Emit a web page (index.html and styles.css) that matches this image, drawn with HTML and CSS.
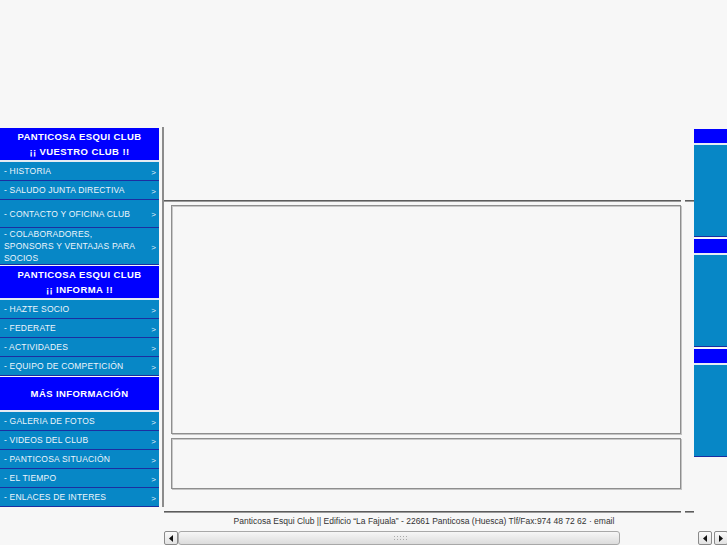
FILE: index.html
```html
<!DOCTYPE html>
<html lang="es">
<head>
<meta charset="utf-8">
<title>Panticosa Esqui Club</title>
<link rel="stylesheet" href="styles.css">
</head>
<body>
<div class="page">
  <div class="left">
    <nav class="menu">
      <div class="head head-first">PANTICOSA ESQUI CLUB<br>¡¡ VUESTRO CLUB !!</div>
      <a class="item">- HISTORIA<span class="arr">&gt;</span></a>
      <a class="item">- SALUDO JUNTA DIRECTIVA<span class="arr">&gt;</span></a>
      <a class="item item-mid">- CONTACTO Y OFICINA CLUB<span class="arr">&gt;</span></a>
      <a class="item item-tall"><span class="multi">- COLABORADORES,<br>SPONSORS Y VENTAJAS PARA<br>SOCIOS</span><span class="arr">&gt;</span></a>
      <div class="head">PANTICOSA ESQUI CLUB<br>¡¡ INFORMA !!</div>
      <a class="item">- HAZTE SOCIO<span class="arr">&gt;</span></a>
      <a class="item">- FEDERATE<span class="arr">&gt;</span></a>
      <a class="item">- ACTIVIDADES<span class="arr">&gt;</span></a>
      <a class="item">- EQUIPO DE COMPETICIÓN<span class="arr">&gt;</span></a>
      <div class="head head-single">MÁS INFORMACIÓN</div>
      <a class="item">- GALERIA DE FOTOS<span class="arr">&gt;</span></a>
      <a class="item">- VIDEOS DEL CLUB<span class="arr">&gt;</span></a>
      <a class="item">- PANTICOSA SITUACIÓN<span class="arr">&gt;</span></a>
      <a class="item">- EL TIEMPO<span class="arr">&gt;</span></a>
      <a class="item">- ENLACES DE INTERES<span class="arr">&gt;</span></a>
    </nav>
  </div>
  <div class="frame">
    <div class="content">
      <main class="main">
        <div class="top-space"></div>
        <div class="rule"><span class="rule-long"></span><span class="rule-short"></span></div>
        <div class="box box-big"></div>
        <div class="box box-small"></div>
        <div class="rule rule-bottom"><span class="rule-long"></span><span class="rule-short"></span></div>
        <p class="footer">Panticosa Esqui Club || Edificio “La Fajuala” - 22661 Panticosa (Huesca) Tlf/Fax:974 48 72 62 · email</p>
      </main>
      <aside class="right">
        <div class="rsec"><div class="rhead"></div><div class="rbody"></div></div>
        <div class="rsec"><div class="rhead"></div><div class="rbody"></div></div>
        <div class="rsec"><div class="rhead"></div><div class="rbody"></div></div>
      </aside>
    </div>
    <div class="hscroll">
      <span class="sbtn sbtn-left"><svg width="6" height="7" viewBox="0 0 6 7"><path d="M5 0 L5 7 L1 3.5 Z" fill="#111"/></svg></span>
      <span class="thumb"><span class="grip"></span></span>
      <span class="trough"></span>
      <span class="sbtn"><svg width="6" height="7" viewBox="0 0 6 7"><path d="M5 0 L5 7 L1 3.5 Z" fill="#111"/></svg></span>
      <span class="sbtn"><svg width="6" height="7" viewBox="0 0 6 7"><path d="M1 0 L1 7 L5 3.5 Z" fill="#111"/></svg></span>
    </div>
  </div>
</div>
</body>
</html>
```

FILE: styles.css
```css
html, body {
  margin: 0;
  padding: 0;
  height: 545px;
  overflow: hidden;
  background: #f7f7f7;
  font-family: "Liberation Sans", Arial, sans-serif;
}

.page {
  display: flex;
  align-items: flex-start;
  height: 545px;
  padding-top: 127px;
  box-sizing: border-box;
}

.left {
  width: 162px;
  flex: none;
  border-right: 2px solid #8c8c8c;
}

.menu {
  width: 159px;
  display: flex;
  flex-direction: column;
}

.head {
  margin-top: 1px;
  height: 32px;
  box-sizing: content-box;
  background: #0000ff;
  border-bottom: 2px solid #e4ebf3;
  color: #fff;
  font-weight: bold;
  font-size: 9.5px;
  letter-spacing: 0.4px;
  line-height: 15px;
  text-align: center;
  display: flex;
  align-items: center;
  justify-content: center;
  padding-bottom: 0;
}

.head > br { display: block; }

.head-first,
.head:not(.head-single) {
  align-items: flex-start;
  padding-top: 0;
}

.head:not(.head-single) {
  height: 31px;
  padding-top: 1px;
}

.head-single {
  height: 33px;
}

.item {
  height: 18px;
  background: #0787c6;
  border-bottom: 1px solid #1c2ea0;
  color: #eef5fb;
  font-size: 8.5px;
  letter-spacing: 0.2px;
  display: flex;
  align-items: center;
  padding: 0 3px 0 4px;
}

.item-mid { height: 27px; }
.item-tall { height: 36px; }

.multi {
  line-height: 12px;
}

.arr {
  margin-left: auto;
  font-size: 8px;
  padding-top: 2px;
}

.frame {
  flex: 1;
  min-width: 0;
  height: 418px;
  display: flex;
  flex-direction: column;
  overflow: hidden;
}

.content {
  flex: 1;
  display: flex;
  min-height: 0;
}

.main {
  width: 530px;
  flex: none;
  display: flex;
  flex-direction: column;
}

.top-space {
  height: 73px;
}

.rule {
  display: flex;
  gap: 4px;
  height: 2px;
}

.rule-long {
  width: 517px;
  background: #5c5c5c;
  border-bottom: 1px solid #9a9a9a;
  height: 1px;
}

.rule-short {
  width: 9px;
  background: #5c5c5c;
  border-bottom: 1px solid #9a9a9a;
  height: 1px;
}

.box {
  margin-left: 7px;
  width: 510px;
  box-sizing: border-box;
  border: 1px solid #8e8e8e;
  box-shadow: inset 1px 1px 0 #c8c8c8, 1px 1px 0 #c4c4c4;
}

.box-big {
  margin-top: 3px;
  height: 229px;
}

.box-small {
  margin-top: 4px;
  height: 51px;
}

.rule-bottom {
  margin-top: 22px;
}

.footer {
  margin: 3px 0 0;
  font-size: 8.5px;
  line-height: 11px;
  color: #333;
  text-align: center;
  padding-right: 10px;
}

.right {
  width: 120px;
  flex: none;
  padding-top: 2px;
}

.rsec {
  margin-bottom: 2px;
}

.rhead {
  height: 14px;
  background: #0000ff;
  border-bottom: 2px solid #e4ebf3;
}

.rbody {
  height: 91px;
  background: #0787c6;
  border-bottom: 1px solid #1c2ea0;
}

.hscroll {
  height: 15px;
  flex: none;
  display: flex;
  align-items: stretch;
}

.sbtn {
  width: 14px;
  flex: none;
  box-sizing: border-box;
  border: 1px solid #8a8a8a;
  border-radius: 2px;
  background: linear-gradient(#fafafa, #e2e2e2);
  display: flex;
  align-items: center;
  justify-content: center;
  margin: 1px 2px 0 0;
}

.sbtn-left {
  width: 14px;
  margin-right: 0;
}

.thumb {
  width: 442px;
  flex: none;
  box-sizing: border-box;
  border: 1px solid #a8a8a8;
  border-radius: 3px;
  background: linear-gradient(#f6f6f6, #dcdcdc);
  display: flex;
  align-items: center;
  justify-content: center;
  margin-top: 1px;
}

.grip {
  width: 16px;
  height: 7px;
  background-image: radial-gradient(circle, #aaa 0.6px, transparent 0.8px);
  background-size: 3px 3px;
  margin-left: 4px;
}

.trough {
  width: 78px;
  flex: none;
  margin-top: 1px;
  background-image: radial-gradient(circle, #d6d6d6 0.5px, transparent 0.7px);
  background-size: 2px 2px;
}
```
